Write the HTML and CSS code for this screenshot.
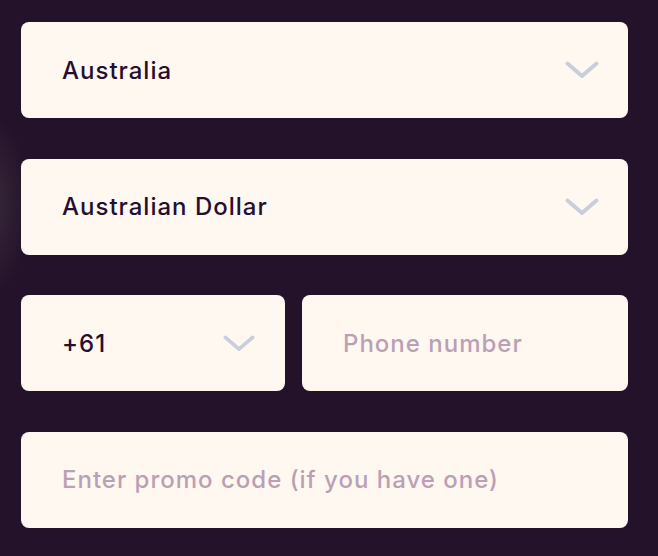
FILE: index.html
```html
<!DOCTYPE html>
<html lang="en">
<head>
<meta charset="utf-8">
<title>Registration</title>
<link rel="stylesheet" href="styles.css">
</head>
<body>
<form class="form">
  <div class="field select">
    <span class="value">Australia</span>
    <svg class="chev" viewBox="0 0 34 18" aria-hidden="true"><path d="M2.5 2.5 L17 15 L31.5 2.5"/></svg>
  </div>
  <div class="field select">
    <span class="value">Australian Dollar</span>
    <svg class="chev" viewBox="0 0 34 18" aria-hidden="true"><path d="M2.5 2.5 L17 15 L31.5 2.5"/></svg>
  </div>
  <div class="row">
    <div class="field select code">
      <span class="value">+61</span>
      <svg class="chev small" viewBox="0 0 34 18" aria-hidden="true"><path d="M2.5 2.5 L17 15 L31.5 2.5"/></svg>
    </div>
    <div class="field phone">
      <span class="placeholder">Phone number</span>
    </div>
  </div>
  <div class="field">
    <span class="placeholder">Enter promo code (if you have one)</span>
  </div>
</form>
</body>
</html>
```
FILE: styles.css
```css
html, body {
  margin: 0;
  padding: 0;
}
body {
  width: 658px;
  height: 556px;
  overflow: hidden;
  background: radial-gradient(ellipse 40px 90px at -10px 205px, #3a2a3c 0%, rgba(58,42,60,0) 100%), #231229;
  font-family: Inter, "Noto Sans", sans-serif;
}
.form {
  display: flex;
  flex-direction: column;
  gap: 40.67px;
  padding: 22px 30px 0 21px;
}
.row {
  display: flex;
  gap: 17px;
}
.field {
  height: 96px;
  box-sizing: border-box;
  background: #fff8f1;
  border-radius: 8px;
  display: flex;
  align-items: center;
  padding: 0 29px 0 41px;
}
.code {
  flex: 0 0 264px;
  padding-right: 30px;
}
.phone {
  flex: 1 1 0;
}
.select {
  justify-content: space-between;
}
.value,
.placeholder {
  font-size: 24px;
  font-weight: 500;
  letter-spacing: 1px;
}
.value {
  color: #250f2e;
}
.placeholder {
  color: #bba0b5;
}
.chev {
  width: 34px;
  height: 18px;
  fill: none;
  stroke: #c8cedb;
  stroke-width: 4;
  stroke-linecap: round;
  stroke-linejoin: round;
}
.chev.small {
  width: 32px;
  height: 17px;
}
```
